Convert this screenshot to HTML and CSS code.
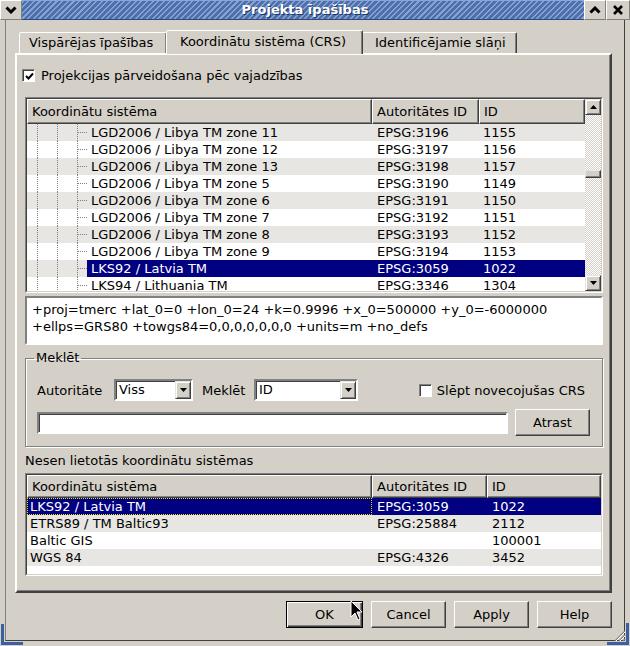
FILE: index.html
```html
<!DOCTYPE html>
<html lang="lv">
<head>
  <meta charset="UTF-8" />
  <title>Projekta īpašības</title>
  <link rel="stylesheet" href="styles.css">
</head>
<body>
  <div class="window">
    <!-- Virsraksta josla -->
    <div class="titlebar">
      <div class="tb-btn">
        <svg width="12" height="8" viewBox="0 0 12 8"><polyline points="1.5,1.5 6,6 10.5,1.5" fill="none" stroke="#000" stroke-width="3"/></svg>
      </div>
      <div class="tb-title">Projekta īpašības</div>
      <div class="tb-btn">
        <svg width="12" height="8" viewBox="0 0 12 8"><polyline points="1.5,6.5 6,2 10.5,6.5" fill="none" stroke="#000" stroke-width="3"/></svg>
      </div>
      <div class="tb-btn close">
        <svg width="10" height="10" viewBox="0 0 10 10"><path d="M1 1 L9 9 M9 1 L1 9" stroke="#000" stroke-width="2.6"/></svg>
      </div>
    </div>

    <div class="client">
      <div class="tabs">
        <div class="tab t1">Vispārējas īpašības</div>
        <div class="tab t2 active">Koordinātu sistēma (CRS)</div>
        <div class="tab t3">Identificējamie slāņi</div>
      </div>

      <div class="panel">
        <div class="check-row">
          <span class="chk">
            <svg width="9" height="9" viewBox="0 0 9 9"><polyline points="1,4 3.5,6.5 8,1.5" fill="none" stroke="#000" stroke-width="2"/></svg>
          </span>
          <span>Projekcijas pārveidošana pēc vajadzības</span>
        </div>

        <!-- CRS koks -->
        <div class="listview tree">
          <div class="lv-inner">
            <div class="lv-main">
              <div class="lv-head">
                <div class="hc c1">Koordinātu sistēma</div>
                <div class="hc c2">Autoritātes ID</div>
                <div class="hc c3">ID</div>
              </div>
              <div class="lv-body" id="tree-body"></div>
            </div>
            <div class="vscroll">
              <div class="sb-btn">
                <svg width="7" height="4" viewBox="0 0 7 4"><path d="M0 4 L3.5 0 L7 4 Z" fill="#000"/></svg>
              </div>
              <div class="sb-track"><div class="sb-thumb"></div></div>
              <div class="sb-btn">
                <svg width="7" height="4" viewBox="0 0 7 4"><path d="M0 0 L3.5 4 L7 0 Z" fill="#000"/></svg>
              </div>
            </div>
          </div>
        </div>

        <div class="projbox">
          +proj=tmerc +lat_0=0 +lon_0=24 +k=0.9996 +x_0=500000 +y_0=-6000000<br>
          +ellps=GRS80 +towgs84=0,0,0,0,0,0,0 +units=m +no_defs
        </div>

        <fieldset class="group">
          <legend>Meklēt</legend>
          <div class="group-inner">
            <div class="search-row">
              <span class="lbl lbl-auth">Autoritāte</span>
              <div class="combo combo-auth">
                <span class="combo-text">Viss</span>
                <span class="combo-btn"><svg width="7" height="4" viewBox="0 0 7 4"><path d="M0 0 L3.5 4 L7 0 Z" fill="#000"/></svg></span>
              </div>
              <span class="lbl lbl-find">Meklēt</span>
              <div class="combo combo-find">
                <span class="combo-text">ID</span>
                <span class="combo-btn"><svg width="7" height="4" viewBox="0 0 7 4"><path d="M0 0 L3.5 4 L7 0 Z" fill="#000"/></svg></span>
              </div>
              <span class="spacer"></span>
              <span class="chk"></span>
              <span class="hide-lbl">Slēpt novecojušas CRS</span>
            </div>
            <div class="search-row2">
              <div class="textfield"></div>
              <button class="btn">Atrast</button>
            </div>
          </div>
        </fieldset>

        <div class="recent-label">Nesen lietotās koordinātu sistēmas</div>

        <!-- Nesen lietotās -->
        <div class="listview recent">
          <div class="lv-inner">
            <div class="lv-main">
              <div class="lv-head">
                <div class="hc c1">Koordinātu sistēma</div>
                <div class="hc c2">Autoritātes ID</div>
                <div class="hc c3">ID</div>
              </div>
              <div class="lv-body">
                <div class="row selected"><div class="cell c1 focus">LKS92 / Latvia TM</div><div class="cell c2">EPSG:3059</div><div class="cell c3">1022</div></div>
                <div class="row alt"><div class="cell c1">ETRS89 / TM Baltic93</div><div class="cell c2">EPSG:25884</div><div class="cell c3">2112</div></div>
                <div class="row"><div class="cell c1">Baltic GIS</div><div class="cell c2"></div><div class="cell c3">100001</div></div>
                <div class="row alt"><div class="cell c1">WGS 84</div><div class="cell c2">EPSG:4326</div><div class="cell c3">3452</div></div>
              </div>
            </div>
          </div>
        </div>
      </div>

      <div class="buttons">
        <button class="btn default">OK</button>
        <button class="btn">Cancel</button>
        <button class="btn">Apply</button>
        <button class="btn">Help</button>
      </div>
    </div>

    <!-- loga stūri un kursors -->
    <div class="grip grip-left"></div>
    <div class="grip grip-right">
      <svg width="14" height="14" viewBox="0 0 14 14"><path d="M13 3 L3 13 M13 7 L7 13 M13 11 L11 13" stroke="#808080" stroke-width="1.2"/><path d="M13 4 L4 13 M13 8 L8 13" stroke="#fff" stroke-width="1"/></svg>
    </div>
    <svg class="cursor" width="13" height="21" viewBox="0 0 13 21"><path d="M1 1 L1 17 L5 13 L8 20 L10 19 L7 12 L12 12 Z" fill="#000" stroke="#fff" stroke-width="1"/></svg>
  </div>

  <script>
    const treeRows = [
      ["LGD2006 / Libya TM zone 11", "EPSG:3196", "1155"],
      ["LGD2006 / Libya TM zone 12", "EPSG:3197", "1156"],
      ["LGD2006 / Libya TM zone 13", "EPSG:3198", "1157"],
      ["LGD2006 / Libya TM zone 5", "EPSG:3190", "1149"],
      ["LGD2006 / Libya TM zone 6", "EPSG:3191", "1150"],
      ["LGD2006 / Libya TM zone 7", "EPSG:3192", "1151"],
      ["LGD2006 / Libya TM zone 8", "EPSG:3193", "1152"],
      ["LGD2006 / Libya TM zone 9", "EPSG:3194", "1153"],
      ["LKS92 / Latvia TM", "EPSG:3059", "1022"],
      ["LKS94 / Lithuania TM", "EPSG:3346", "1304"]
    ];
    const selected = 8;

    document.getElementById("tree-body").innerHTML = treeRows.map((r, i) => {
      const cls = (i % 2 === 0 ? "row alt" : "row") + (i === selected ? " selected" : "");
      return `<div class="${cls}">` +
        `<div class="cell c1 tree-cell"><i class="g"></i><i class="g"></i><i class="g br"></i><span class="node">${r[0]}</span></div>` +
        `<div class="cell c2">${r[1]}</div><div class="cell c3">${r[2]}</div></div>`;
    }).join("");
  </script>
</body>
</html>
```

FILE: styles.css
```css
* { box-sizing: border-box; }
body {
  margin: 0;
  font-family: "DejaVu Sans", sans-serif;
  font-size: 13px;
  color: #000;
  background: #d4d0c8;
}

.window {
  position: relative;
  width: 630px;
  height: 646px;
  background: #d4d0c8;
  display: flex;
  flex-direction: column;
  overflow: hidden;
}

/* Virsraksta josla */
.titlebar {
  display: flex;
  height: 20px;
  flex: none;
}
.tb-btn {
  width: 22px;
  height: 20px;
  flex: none;
  display: flex;
  align-items: center;
  justify-content: center;
  background: #d4d0c8;
  border: 1px solid;
  border-color: #fff #808080 #808080 #fff;
}
.tb-btn.close { width: 24px; }
.tb-title {
  flex: 1;
  background: repeating-linear-gradient(135deg, #86a2d2 0 1.5px, #4d70ac 1.5px 4px);
  border-top: 1px solid #8aa6d6;
  border-bottom: 1px solid #2c4a80;
  color: #fff;
  font-weight: bold;
  text-align: center;
  line-height: 18px;
  text-shadow: 1px 1px 0 #1d355f;
  padding-left: 4px;
}

/* Loga saturs */
.client {
  flex: 1;
  margin: 0 5px 5px 5px;
  border-left: 1px solid #808080;
  border-right: 1px solid #404040;
  border-bottom: 1px solid #404040;
  padding: 10px 12px 0 9px;
  display: flex;
  flex-direction: column;
}

/* Cilnes */
.tabs {
  display: flex;
  align-items: flex-end;
  height: 23px;
  flex: none;
}
.tab {
  height: 21px;
  line-height: 19px;
  white-space: nowrap;
  background: #d4d0c8;
  border: 1px solid;
  border-bottom: none;
  border-color: #fff #404040 transparent #fff;
  box-shadow: inset -1px 0 #808080;
  border-radius: 2px 2px 0 0;
}
.tab.t1 { width: 148px; margin-left: 4px; padding-left: 9px; }
.tab.t2 { width: 197px; margin: 0 -1px; padding-left: 13px; }
.tab.t3 { width: 155px; padding-left: 12px; }
.tab.active {
  position: relative;
  z-index: 1;
  height: 24px;
  margin-bottom: -1px;
  line-height: 21px;
}

.panel {
  height: 540px;
  flex: none;
  border: 2px solid;
  border-color: #fff #404040 #404040 #fff;
  box-shadow: inset -1px -1px #808080;
  padding: 12px 7px 0 8px;
}

/* Izvēles rūtiņa */
.check-row {
  display: flex;
  align-items: center;
  height: 17px;
  margin-left: -3px;
}
.chk {
  width: 13px;
  height: 13px;
  flex: none;
  background: #fff;
  border: 1px solid;
  border-color: #808080 #fff #fff #808080;
  box-shadow: inset 1px 1px #404040;
  display: flex;
  align-items: center;
  justify-content: center;
  margin-right: 6px;
}
.chk svg { margin: 1px 0 0 1px; }

/* Saraksti */
.listview {
  border: 1px solid;
  border-color: #808080 #fff #fff #808080;
}
.lv-inner {
  height: 100%;
  display: flex;
  background: #fff;
  border: 1px solid;
  border-color: #404040 #d4d0c8 #d4d0c8 #404040;
  overflow: hidden;
}
.lv-main { flex: 1; overflow: hidden; }
.tree { margin-top: 13px; height: 196px; }
.recent { margin-top: 4px; height: 103px; }

.lv-head { display: flex; height: 25px; }
.recent .lv-head { height: 23px; }
.hc {
  background: #d4d0c8;
  border: 1px solid;
  border-color: #fff #404040 #404040 #fff;
  box-shadow: inset -1px -1px #808080;
  padding-left: 4px;
  display: flex;
  align-items: center;
  white-space: nowrap;
}
.c1 { width: 345px; flex: none; }
.c2 { width: 107px; flex: none; }
.c3 { flex: 1; }
.recent .c2 { width: 115px; }

.row {
  display: flex;
  height: 17px;
  line-height: 17px;
  white-space: nowrap;
}
.row.alt { background: #e8e6e2; }
.cell { padding-left: 4px; overflow: hidden; }
.cell.c2 { padding-left: 5px; }
.recent .cell.c1 { padding-left: 3px; }
.recent .cell.c3 { padding-left: 5px; }

.row.selected .c2,
.row.selected .c3,
.recent .row.selected .c1,
.row.selected .node {
  background: #000080;
  color: #fff;
}
.cell.focus { outline: 1px dotted #e8e000; outline-offset: -1px; }

/* Koka līnijas */
.tree-cell {
  display: flex;
  padding-left: 10px;
}
.g {
  width: 20px;
  height: 17px;
  flex: none;
  border-left: 1px dotted #808080;
}
.g.br {
  width: 10px;
  display: flex;
  align-items: center;
}
.g.br::after {
  content: "";
  flex: 1;
  border-top: 1px dotted #808080;
}
.node { flex: 1; padding-left: 4px; }

/* Ritjosla */
.vscroll {
  width: 16px;
  flex: none;
  display: flex;
  flex-direction: column;
}
.sb-btn {
  height: 16px;
  flex: none;
  background: #d4d0c8;
  border: 1px solid;
  border-color: #e8e6e2 #404040 #404040 #e8e6e2;
  box-shadow: inset 1px 1px #fff, inset -1px -1px #808080;
  display: flex;
  align-items: center;
  justify-content: center;
}
.sb-track {
  flex: 1;
  background: repeating-conic-gradient(#d4d0c8 0 25%, #fff 0 50%) 0 0 / 2px 2px;
}
.sb-thumb {
  height: 8px;
  margin-top: 55px;
  background: #d4d0c8;
  border: 1px solid;
  border-color: #e8e6e2 #404040 #404040 #e8e6e2;
  box-shadow: inset -1px -1px #808080;
}

/* PROJ teksts */
.projbox {
  margin-top: 3px;
  height: 49px;
  background: #fff;
  border: 2px solid;
  border-color: #808080 #fff #fff #808080;
  padding: 3px 5px;
  line-height: 17px;
  white-space: nowrap;
}

/* Meklēšanas grupa */
.group {
  margin: 5px 0 0;
  padding: 0;
  min-width: 0;
  border: 1px solid #808080;
  box-shadow: inset 1px 1px #fff, 1px 1px #fff;
}
.group legend {
  margin-left: 8px;
  padding: 0 2px;
  line-height: 16px;
}
.group-inner { padding: 13px 12px 10px 11px; }

.search-row {
  display: flex;
  align-items: center;
  height: 22px;
}
.lbl-auth { width: 77px; flex: none; }
.lbl-find { width: 52px; flex: none; margin-left: 9px; }
.spacer { flex: 1; }
.search-row .chk { margin-right: 5px; }
.hide-lbl { margin-right: 5px; }

.combo {
  height: 22px;
  flex: none;
  display: flex;
  background: #fff;
  border: 2px solid;
  border-color: #808080 #fff #fff #808080;
  box-shadow: inset 1px 1px #404040;
}
.combo-auth { width: 79px; }
.combo-find { width: 104px; }
.combo-text { flex: 1; padding-left: 3px; line-height: 18px; }
.combo-btn {
  width: 16px;
  height: 18px;
  background: #d4d0c8;
  border: 1px solid;
  border-color: #e8e6e2 #404040 #404040 #e8e6e2;
  box-shadow: inset 1px 1px #fff, inset -1px -1px #808080;
  display: flex;
  align-items: center;
  justify-content: center;
}

.search-row2 {
  display: flex;
  align-items: center;
  gap: 7px;
  margin-top: 8px;
}
.textfield {
  flex: 1;
  height: 22px;
  background: #fff;
  border: 2px solid;
  border-color: #808080 #fff #fff #808080;
  box-shadow: inset 1px 1px #404040;
}

.recent-label {
  margin-top: 5px;
  line-height: 17px;
}

/* Pogas */
.btn {
  width: 75px;
  height: 27px;
  flex: none;
  font-family: "DejaVu Sans", sans-serif;
  font-size: 13px;
  color: #000;
  background: #d4d0c8;
  border: 1px solid;
  border-color: #fff #404040 #404040 #fff;
  box-shadow: inset -1px -1px #808080;
  padding: 0;
}
.btn.default {
  width: 77px;
  border-color: #000;
  box-shadow: inset 1px 1px #fff, inset -1px -1px #404040, inset -2px -2px #808080;
}
.buttons {
  display: flex;
  justify-content: flex-end;
  gap: 7px;
  margin-top: 8px;
}
.buttons .btn + .btn { margin-left: 1px; }

/* Stūri un kursors */
.grip {
  position: absolute;
  border: 0 solid #3b5fa0;
}
.grip-left {
  left: 1px;
  bottom: 1px;
  width: 22px;
  height: 21px;
  border-left-width: 3px;
  border-bottom-width: 3px;
}
.grip-right {
  right: 1px;
  bottom: 1px;
  width: 22px;
  height: 22px;
  border-right-width: 3px;
  border-bottom-width: 3px;
  display: flex;
  align-items: flex-end;
  justify-content: flex-end;
}
.cursor {
  position: absolute;
  left: 350px;
  top: 600px;
}
```
